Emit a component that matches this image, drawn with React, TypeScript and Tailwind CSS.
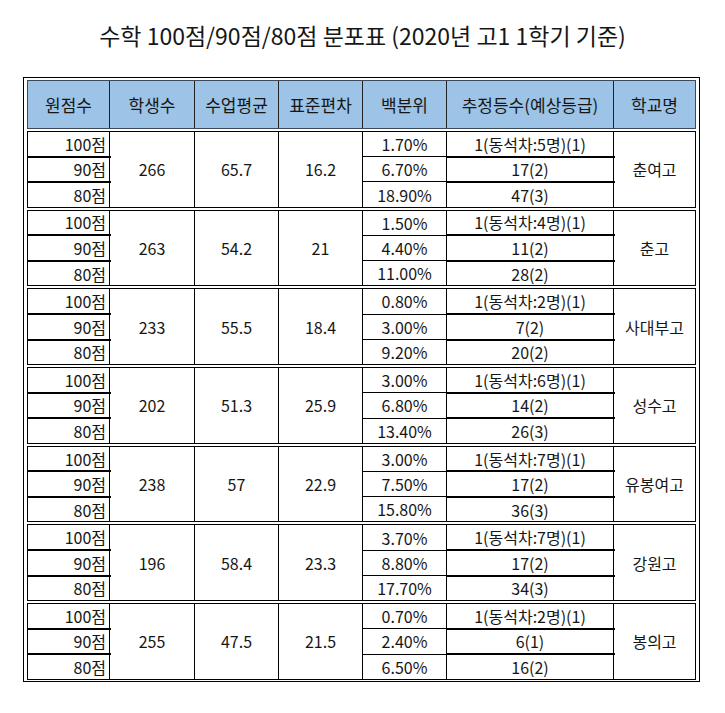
const groups = [
  { n: "266", avg: "65.7", sd: "16.2", pct: ["1.70%", "6.70%", "18.90%"], rank: ["1(동석차:5명)(1)", "17(2)", "47(3)"], school: "춘여고" },
  { n: "263", avg: "54.2", sd: "21", pct: ["1.50%", "4.40%", "11.00%"], rank: ["1(동석차:4명)(1)", "11(2)", "28(2)"], school: "춘고" },
  { n: "233", avg: "55.5", sd: "18.4", pct: ["0.80%", "3.00%", "9.20%"], rank: ["1(동석차:2명)(1)", "7(2)", "20(2)"], school: "사대부고" },
  { n: "202", avg: "51.3", sd: "25.9", pct: ["3.00%", "6.80%", "13.40%"], rank: ["1(동석차:6명)(1)", "14(2)", "26(3)"], school: "성수고" },
  { n: "238", avg: "57", sd: "22.9", pct: ["3.00%", "7.50%", "15.80%"], rank: ["1(동석차:7명)(1)", "17(2)", "36(3)"], school: "유봉여고" },
  { n: "196", avg: "58.4", sd: "23.3", pct: ["3.70%", "8.80%", "17.70%"], rank: ["1(동석차:7명)(1)", "17(2)", "34(3)"], school: "강원고" },
  { n: "255", avg: "47.5", sd: "21.5", pct: ["0.70%", "2.40%", "6.50%"], rank: ["1(동석차:2명)(1)", "6(1)", "16(2)"], school: "봉의고" },
];

const scores = ["100점", "90점", "80점"];
const headers = ["원점수", "학생수", "수업평균", "표준편차", "백분위", "추정등수(예상등급)", "학교명"];
const widths = ["w-[81px]", "w-[85px]", "w-[84px]", "w-[84px]", "w-[84px]", "w-[167px]", "w-[82px]"];

export default function App() {
  return (
    <div
      className="w-[725px] h-[713px] bg-white text-[#161616]"
      style={{ fontFamily: '"Noto Sans CJK KR", "Noto Sans", sans-serif' }}
    >
      {/* Title */}
      <div className="h-[77px] pt-[20px] text-center text-[23px] leading-[30px]">
        수학 100점/90점/80점 분포표 (2020년 고1 1학기 기준)
      </div>

      {/* Table, double outer border */}
      <div className="ml-[23px] w-[677px] border border-black px-[3px] pt-[2px] pb-[1px]">
        <div className="flex flex-col gap-[2px]">
          {/* Header */}
          <div className="flex h-[49px] border border-[#3a4a5a] bg-[#9dc3e6] text-[17px]">
            {headers.map((h, i) => (
              <div
                key={h}
                className={`${widths[i]} flex items-center justify-center ${i > 0 ? "border-l border-[#222]" : ""}`}
              >
                {h}
              </div>
            ))}
          </div>

          {/* Groups */}
          {groups.map((g) => (
            <div key={g.school} className="flex h-[76.7px] border border-black text-[16px] leading-none">
              <div className="w-[81px] flex flex-col">
                {scores.map((s, i) => (
                  <div
                    key={s}
                    className={`flex-1 flex items-center justify-end pr-[3px] ${i > 0 ? "border-t-2 border-black -mr-[2px] pr-[5px]" : ""}`}
                  >
                    {s}
                  </div>
                ))}
              </div>
              <div className="w-[85px] border-l border-black flex items-center justify-center">{g.n}</div>
              <div className="w-[84px] border-l border-black flex items-center justify-center">{g.avg}</div>
              <div className="w-[84px] border-l border-black flex items-center justify-center">{g.sd}</div>
              <div className="w-[84px] border-l border-black flex flex-col">
                {g.pct.map((p, i) => (
                  <div key={i} className={`flex-1 flex items-center justify-center ${i > 0 ? "border-t border-black" : ""}`}>
                    {p}
                  </div>
                ))}
              </div>
              <div className="w-[167px] border-l border-black flex flex-col">
                {g.rank.map((r, i) => (
                  <div
                    key={i}
                    className={`flex-1 flex items-center justify-center ${i > 0 ? "border-t-2 border-black -mr-[2px] pr-[2px]" : ""}`}
                  >
                    {r}
                  </div>
                ))}
              </div>
              <div className="w-[82px] border-l border-black flex items-center justify-center">{g.school}</div>
            </div>
          ))}
        </div>
      </div>
    </div>
  );
}
